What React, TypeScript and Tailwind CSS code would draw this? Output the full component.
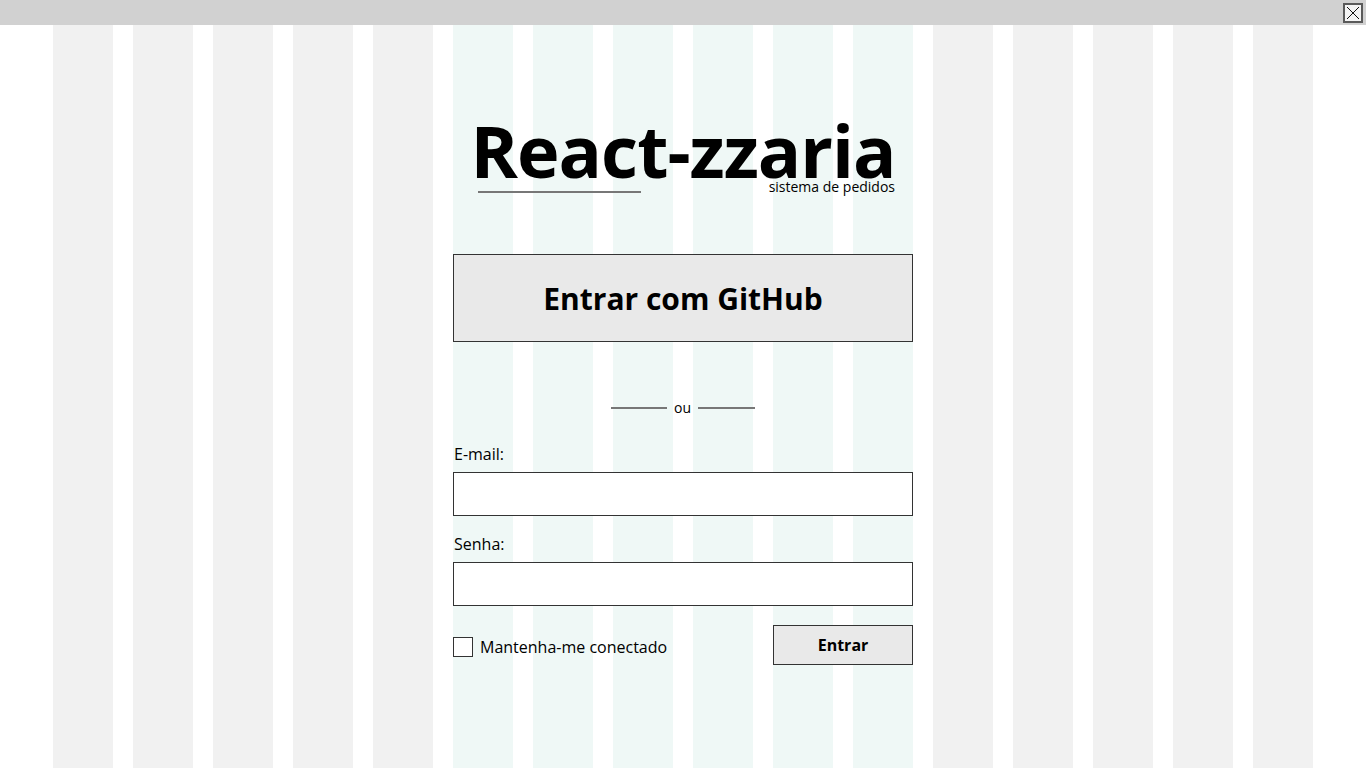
import React from "react";

const columns = Array.from({ length: 16 }, (_, i) => i);

const App: React.FC = () => {
  return (
    <div className="min-h-screen bg-white font-['Open_Sans',sans-serif] text-black flex flex-col">
      {/* Top bar */}
      <header className="h-[25px] bg-[#d1d1d1] flex justify-end items-start pr-[3px] pt-[3px]">
        <svg width="20" height="20" viewBox="0 0 20 20">
          <rect x="1" y="1" width="18" height="18" fill="#f4f4f4" stroke="#5a5a5a" strokeWidth="2" />
          <path d="M4 4 L16 16 M16 4 L4 16" stroke="#111" strokeWidth="1" />
        </svg>
      </header>

      <main className="relative flex-1">
        {/* Grid columns (background) */}
        <div className="absolute inset-0 flex justify-center gap-5">
          {columns.map((i) => (
            <div
              key={i}
              className={`w-[60px] ${i >= 5 && i <= 10 ? "bg-[#eff8f6]" : "bg-[#f1f1f1]"}`}
            />
          ))}
        </div>

        <div className="relative w-[460px] mx-auto pt-[89px] pb-10">
          {/* Logo */}
          <h1 className="text-[72px] font-bold leading-none text-center tracking-[-1px]">
            React-zzaria
          </h1>
          <div className="flex justify-between items-start -mt-[9px] pl-[25px] pr-[18px]">
            <span className="mt-[14px] h-[2px] w-[163px] bg-[#777]" />
            <span className="text-sm leading-5">sistema de pedidos</span>
          </div>

          {/* GitHub */}
          <button className="mt-[57px] w-full h-[88px] bg-[#e9e9e9] border border-[#333] text-[30px] font-bold">
            Entrar com GitHub
          </button>

          {/* Divider */}
          <div className="mt-[56px] flex items-center justify-center gap-[7px]">
            <span className="h-[2px] w-[56px] bg-[#777]" />
            <span className="text-sm leading-5">ou</span>
            <span className="h-[2px] w-[57px] bg-[#777]" />
          </div>

          {/* Form */}
          <form className="flex flex-col">
            <label className="mt-[25px] text-base leading-[22px] pl-px">E-mail:</label>
            <input
              type="email"
              className="mt-[7px] h-[44px] w-full bg-white border border-[#333] outline-none px-2"
            />
            <label className="mt-[17px] text-base leading-[22px] pl-px">Senha:</label>
            <input
              type="password"
              className="mt-[7px] h-[44px] w-full bg-white border border-[#333] outline-none px-2"
            />

            <div className="mt-[19px] flex items-center justify-between">
              <label className="flex items-center gap-[7px] mt-[3px] text-base">
                <span className="w-[20px] h-[20px] bg-white border border-[#333]" />
                Mantenha-me conectado
              </label>
              <button
                type="button"
                className="w-[140px] h-[40px] bg-[#e9e9e9] border border-[#333] text-base font-bold"
              >
                Entrar
              </button>
            </div>
          </form>
        </div>
      </main>
    </div>
  );
};

export default App;
